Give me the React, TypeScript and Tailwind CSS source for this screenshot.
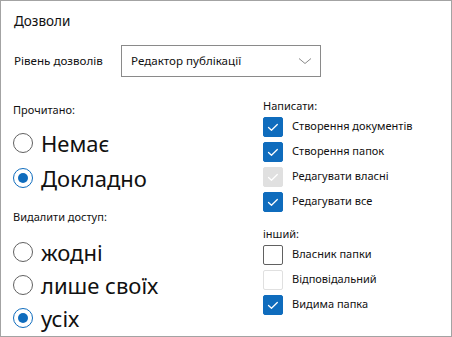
type Box = { label: string; state: "on" | "off" | "dimOn" | "dimOff" };

const writeBoxes: Box[] = [
  { label: "Створення документів", state: "on" },
  { label: "Створення папок", state: "on" },
  { label: "Редагувати власні", state: "dimOn" },
  { label: "Редагувати все", state: "on" },
];

const otherBoxes: Box[] = [
  { label: "Власник папки", state: "off" },
  { label: "Відповідальний", state: "dimOff" },
  { label: "Видима папка", state: "on" },
];

function Radio({ label, checked }: { label: string; checked?: boolean }) {
  return (
    <div className="flex items-center h-full">
      <span
        className={`w-[20px] h-[20px] rounded-full border flex items-center justify-center bg-white ${
          checked ? "border-[#0f6cbd]" : "border-[#616161]"
        }`}
      >
        {checked && <span className="w-[10px] h-[10px] rounded-full bg-[#0f6cbd]" />}
      </span>
      <span className="ml-[8px] text-[22px] leading-none text-[#111]">{label}</span>
    </div>
  );
}

function Check({ label, state }: Box) {
  const boxClass =
    state === "on"
      ? "bg-[#0f6cbd] border-[#0f6cbd]"
      : state === "dimOn"
        ? "bg-[#e0e0e0] border-[#e0e0e0]"
        : state === "dimOff"
          ? "bg-white border-[#e0e0e0]"
          : "bg-white border-[#616161]";
  return (
    <div className="flex items-center h-[25px]">
      <span className={`w-[20px] h-[20px] rounded-[2px] border flex items-center justify-center ${boxClass}`}>
        {(state === "on" || state === "dimOn") && (
          <svg width="20" height="20" viewBox="0 0 20 20" fill="none">
            <path d="M5 10.5 L8.3 13.6 L14.8 7.2" stroke="white" strokeWidth="1.4" strokeLinecap="round" strokeLinejoin="round" />
          </svg>
        )}
      </span>
      <span className="ml-[9px] text-[11px] text-[#111]">{label}</span>
    </div>
  );
}

export default function App() {
  return (
    <div className="w-[452px] h-[337px] border border-[#a3a3a3] bg-white overflow-hidden font-['Noto_Sans',sans-serif]">
      {/* Header */}
      <div className="pl-[13px] pt-[10px]">
        <h1 className="h-[20px] leading-[20px] text-[13.5px] text-[#111]">Дозволи</h1>
        <div className="mt-[14px] flex items-center h-[32px]">
          <span className="w-[107px] text-[11.6px] text-[#111]">Рівень дозволів</span>
          <div className="w-[200px] h-[32px] border border-[#8a8a8a] flex items-center justify-between pl-[9px] pr-[7px]">
            <span className="text-[11.6px] text-[#111]">Редактор публікації</span>
            <svg width="14" height="8" viewBox="0 0 14 8" fill="none" className="mr-[1px]">
              <path d="M1 1.5 L7 6.5 L13 1.5" stroke="#8a8a8a" strokeWidth="1" />
            </svg>
          </div>
        </div>
      </div>

      <div className="flex pl-[12px]">
        {/* Left column */}
        <div className="w-[250px]">
          <div className="mt-[25px] h-[16px] leading-[16px] text-[11px] text-[#111]">Прочитано:</div>
          <div className="mt-[7px]">
            <div className="h-[35px]"><Radio label="Немає" /></div>
            <div className="h-[35px]"><Radio label="Докладно" checked /></div>
          </div>
          <div className="mt-[14px] h-[16px] leading-[16px] text-[11px] text-[#111]">Видалити доступ:</div>
          <div className="mt-[10px]">
            <div className="h-[33px]"><Radio label="жодні" /></div>
            <div className="h-[33px]"><Radio label="лише своїх" /></div>
            <div className="h-[33px]"><Radio label="усіх" checked /></div>
          </div>
        </div>

        {/* Right column */}
        <div>
          <div className="mt-[21px] h-[16px] leading-[16px] text-[11px] text-[#111]">Написати:</div>
          {writeBoxes.map((b) => (
            <Check key={b.label} {...b} />
          ))}
          <div className="mt-[12px] h-[16px] leading-[16px] text-[11px] text-[#111]">інший:</div>
          {otherBoxes.map((b) => (
            <Check key={b.label} {...b} />
          ))}
        </div>
      </div>
    </div>
  );
}
